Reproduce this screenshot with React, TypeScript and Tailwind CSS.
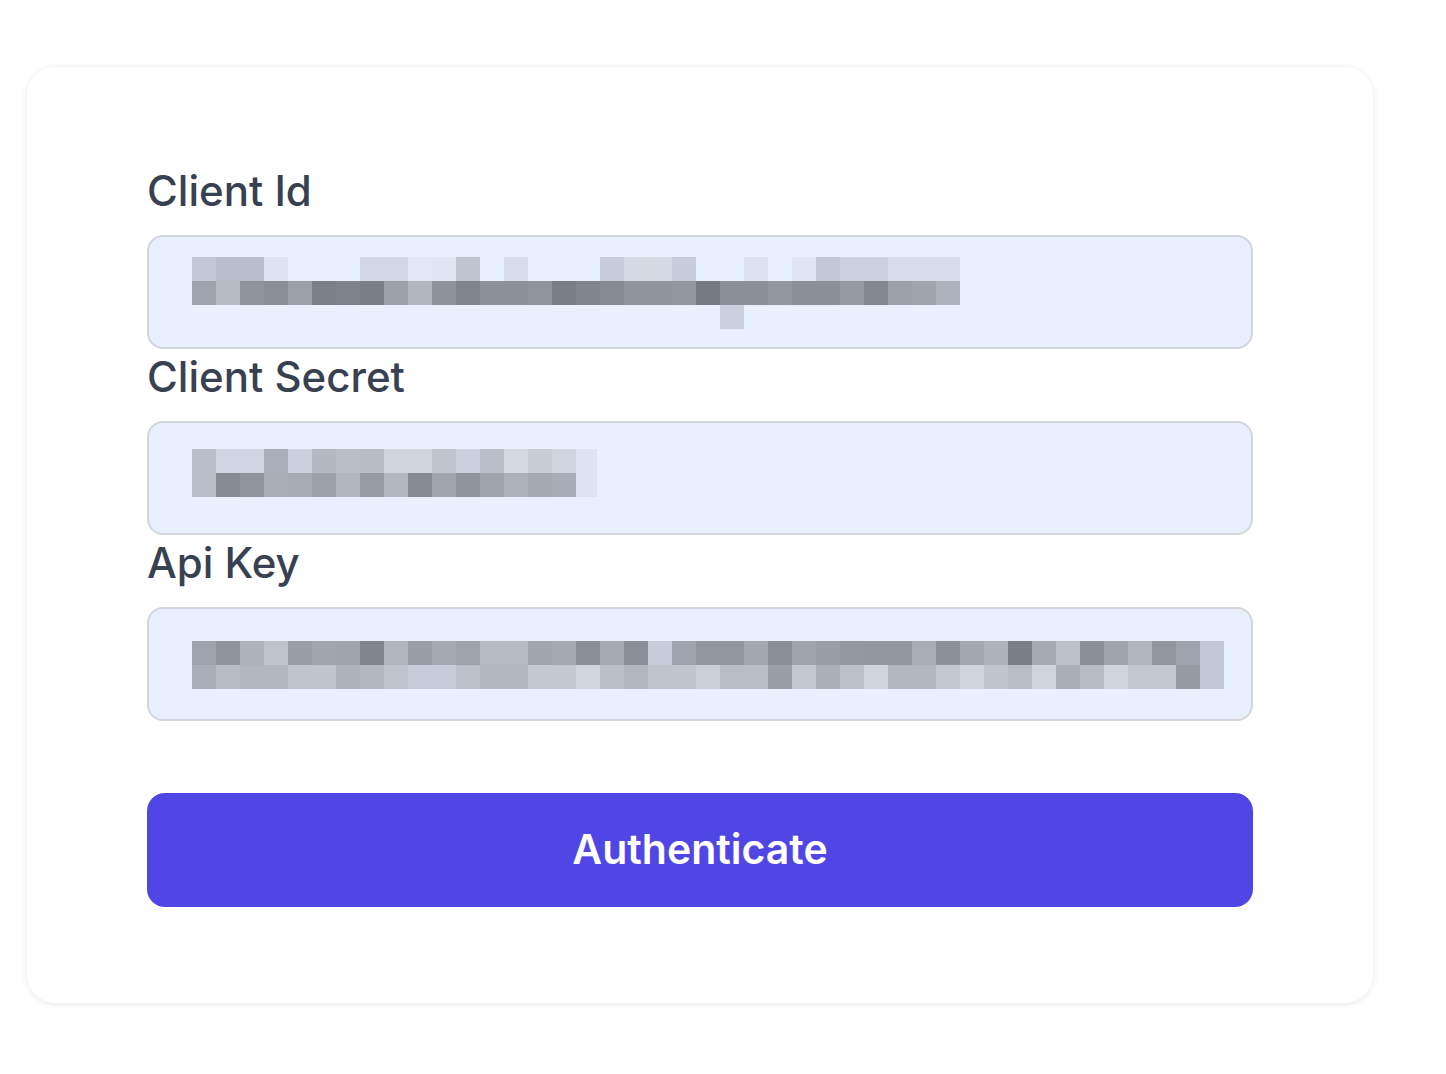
const clientIdTop = [
  "#c3c8d4", "#b9bdc9", "#b9bdc9", "#dde3ef", "", "", "", "#d2d7e3", "#d2d7e3", "#e2e7f3",
  "#e0e5f1", "#c0c5cf", "", "#d7dce8", "", "", "", "#c8ccd8", "#d5dae5", "#d5dae5",
  "#c8cdd9", "", "", "#dde2ee", "", "#e0e5f1", "#c3c7d3", "#cdd1dd", "#cdd1dd", "#d8dde9",
  "#d8dde9", "#d8dde9",
];
const clientIdBottom = [
  "#9ea2ac", "#b5bac4", "#8f939d", "#8a8e98", "#9b9fa9", "#7c808a", "#7f838d", "#7a7e88", "#9ca0aa", "#b1b6c0",
  "#8e929c", "#80848e", "#8c9099", "#8c9099", "#9195a0", "#7a7e88", "#80848e", "#868a94", "#8f939d", "#8f939d",
  "#9296a0", "#757983", "#8b8f99", "#8b8f99", "#9397a1", "#8b8f99", "#8b8f99", "#959aa3", "#838791", "#9ca0aa",
  "#a0a4ae", "#adb2bc",
];
const clientIdExtra = Array.from({ length: 32 }, (_, i) => (i === 22 ? "#cbd0dc" : ""));

const secretTop = [
  "#b8bec8", "#cfd5e1", "#d1d6e2", "#aaaeb8", "#cad0dc", "#b3b8c3", "#b9bdc8", "#b7bcc6",
  "#cfd4df", "#cfd4df", "#bfc4cf", "#cad0dc", "#b9bfc9", "#d4d9e4", "#c7ccd7", "#cfd4df",
];
const secretBottom = [
  "#b8bec8", "#878b95", "#9195a0", "#a9adb6", "#a7abb5", "#9da1ab", "#b2b6c1", "#979ba5",
  "#b3b7c2", "#868a94", "#a1a5af", "#8f939d", "#a0a4ae", "#adb1bc", "#a5a9b3", "#a7acb6",
];

const apiTop = [
  "#9ea2ac", "#8f939d", "#afb3bd", "#bfc3cd", "#9a9ea8", "#a2a6b0", "#a0a4ae", "#80848e", "#b0b4be", "#9a9ea8",
  "#a5a9b3", "#9ea2ac", "#b6bac4", "#b6bac4", "#a2a6b0", "#a4a8b2", "#8a8e98", "#a6aab4", "#8a8e98", "#c8ccd8",
  "#9fa3ad", "#9296a0", "#9296a0", "#a3a7b1", "#8a8e98", "#a0a4ae", "#9a9ea8", "#9498a2", "#9397a1", "#9397a1",
  "#a9adb7", "#8d919b", "#a3a7b1", "#afb3bd", "#7b7f89", "#a6aab4", "#bcc0ca", "#8b8f99", "#a0a4ae", "#b0b4be",
  "#9296a0", "#9ea2ac", "#c3c7d3",
];
const apiBottom = [
  "#a9adb7", "#b8bcc6", "#b3b7c1", "#b3b7c1", "#c0c4ce", "#c0c4ce", "#adb1bb", "#b3b7c1", "#bfc3cd", "#c8ccd8",
  "#c8ccd8", "#bcc0ca", "#b4b8c2", "#b4b8c2", "#c3c7d1", "#c3c7d1", "#d1d5e0", "#bbbfc9", "#b3b7c1", "#c0c4ce",
  "#c0c4ce", "#cbcfda", "#b9bdc7", "#b9bdc7", "#9a9ea8", "#c3c7d1", "#abafb9", "#bcc0ca", "#d0d4df", "#b3b7c1",
  "#b3b7c1", "#c3c7d1", "#d0d4df", "#c1c5cf", "#b9bdc7", "#d0d4df", "#a9adb7", "#b8bcc6", "#d0d4df", "#c3c7d1",
  "#c3c7d1", "#959aa3", "#c3c7d3",
];

// pixelated (redacted) value shown inside the field
function Mosaic({ rows, tail }: { rows: string[][]; tail?: string }) {
  return (
    <div className="flex flex-col">
      {rows.map((row, r) => (
        <div key={r} className="flex">
          {row.map((c, i) => (
            <div key={i} className="w-[24px] h-[24px]" style={{ backgroundColor: c || "transparent" }} />
          ))}
          {tail && r < 2 && <div className="w-[21px] h-[24px]" style={{ backgroundColor: tail }} />}
        </div>
      ))}
    </div>
  );
}

function Field({ label, offset, children }: { label: string; offset: string; children: React.ReactNode }) {
  return (
    <div>
      <label className="block text-[42px] leading-[56px] font-medium text-[#374151] mb-[16px]">{label}</label>
      <div className={`h-[114px] rounded-2xl border-2 border-[#d2d5db] bg-[#e8f0fe] pl-[43px] ${offset}`}>
        {children}
      </div>
    </div>
  );
}

export default function App() {
  return (
    <div className="min-h-screen bg-white pt-[67px] pl-[27px]" style={{ fontFamily: "Inter, 'Noto Sans', sans-serif" }}>
      <div className="w-[1346px] rounded-[28px] bg-white shadow-[0_1px_6px_rgba(0,0,0,0.1)] px-[120px] pt-[96px] pb-[96px]">
        <form className="flex flex-col" onSubmit={(e) => e.preventDefault()}>
          <Field label="Client Id" offset="pt-[20px]">
            <Mosaic rows={[clientIdTop, clientIdBottom, clientIdExtra]} />
          </Field>
          <Field label="Client Secret" offset="pt-[26px]">
            <Mosaic rows={[secretTop, secretBottom]} tail="#dde3ef" />
          </Field>
          <Field label="Api Key" offset="pt-[32px]">
            <Mosaic rows={[apiTop, apiBottom]} />
          </Field>
          <button
            type="submit"
            className="mt-[72px] h-[114px] rounded-[18px] bg-[#4f46e5] text-white text-[41px] font-semibold"
          >
            Authenticate
          </button>
        </form>
      </div>
    </div>
  );
}
